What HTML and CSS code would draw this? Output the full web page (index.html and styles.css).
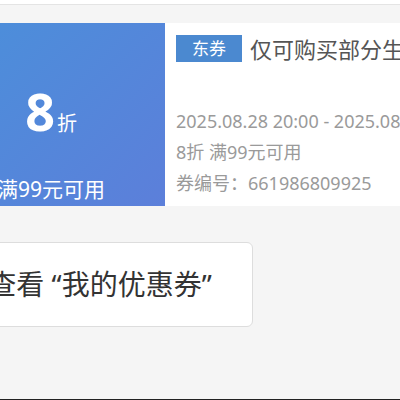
FILE: index.html
```html
<!DOCTYPE html>
<html lang="zh-CN">
<head>
    <meta charset="UTF-8">
    <meta name="viewport" content="width=device-width, initial-scale=1.0">
    <title>我的优惠券</title>
    <link rel="stylesheet" href="styles.css">
</head>
<body>
    <div class="topbar"></div>

    <div class="page">
        <div class="coupon">
            <div class="coupon-left">
                <div class="discount"><span class="num">8</span><span class="unit">折</span></div>
                <div class="limit">满99元可用</div>
            </div>
            <div class="coupon-right">
                <div class="title-row">
                    <span class="tag">东券</span>
                    <span class="title">仅可购买部分生鲜商品</span>
                </div>
                <div class="info">
                    <p>2025.08.28 20:00 - 2025.08.31 23:59</p>
                    <p>8折 满99元可用</p>
                    <p>券编号：661986809925</p>
                </div>
            </div>
        </div>

        <a class="view-btn" href="#">查看 “我的优惠券”</a>
    </div>

    <div class="bottom-line"></div>
</body>
</html>
```

FILE: styles.css
```css
html, body {
    margin: 0;
    height: 100%;
}

body {
    font-family: "Noto Sans", "Noto Sans CJK SC", sans-serif;
    background-color: #f5f5f5;
    color: #333;
    overflow: hidden;
    position: relative;
}

.topbar {
    height: 4px;
    background: #fff;
    border-bottom: 1px solid #e4e4e4;
}

.page {
    margin-left: -63px;
    width: 700px;
    padding-top: 18px;
}

.coupon {
    display: flex;
    height: 183px;
    background: #fff;
}

.coupon-left {
    width: 228px;
    display: flex;
    flex-direction: column;
    align-items: center;
    color: #fff;
    background: linear-gradient(135deg, #4a90da 0%, #5c7fda 100%);
}

.discount {
    margin-top: 62px;
    line-height: 1;
}

.num {
    font-size: 52px;
    font-weight: bold;
}

.unit {
    font-size: 20px;
    margin-left: 2px;
}

.limit {
    margin-top: auto;
    margin-bottom: 3px;
    font-size: 21px;
}

.coupon-right {
    flex: 1;
    padding: 9px 0 7px 11px;
    display: flex;
    flex-direction: column;
}

.title-row {
    display: flex;
    align-items: center;
}

.tag {
    width: 66px;
    height: 27px;
    line-height: 27px;
    text-align: center;
    background: #4b89d0;
    color: #fff;
    font-size: 17px;
}

.title {
    margin-left: 8px;
    font-size: 22px;
    color: #555;
    white-space: nowrap;
}

.info {
    margin-top: auto;
    color: #9a9a9a;
    font-size: 18px;
}

.info p {
    margin: 0;
    line-height: 31px;
    white-space: nowrap;
}

.view-btn {
    display: block;
    margin: 36px 0 0 10px;
    width: 304px;
    height: 83px;
    line-height: 83px;
    text-align: center;
    background: #fff;
    border: 1px solid #ddd;
    border-radius: 6px;
    color: #333;
    font-size: 28px;
    text-decoration: none;
}

.bottom-line {
    position: absolute;
    left: 0;
    right: 0;
    bottom: 0;
    height: 1px;
    background: #222;
}
```
